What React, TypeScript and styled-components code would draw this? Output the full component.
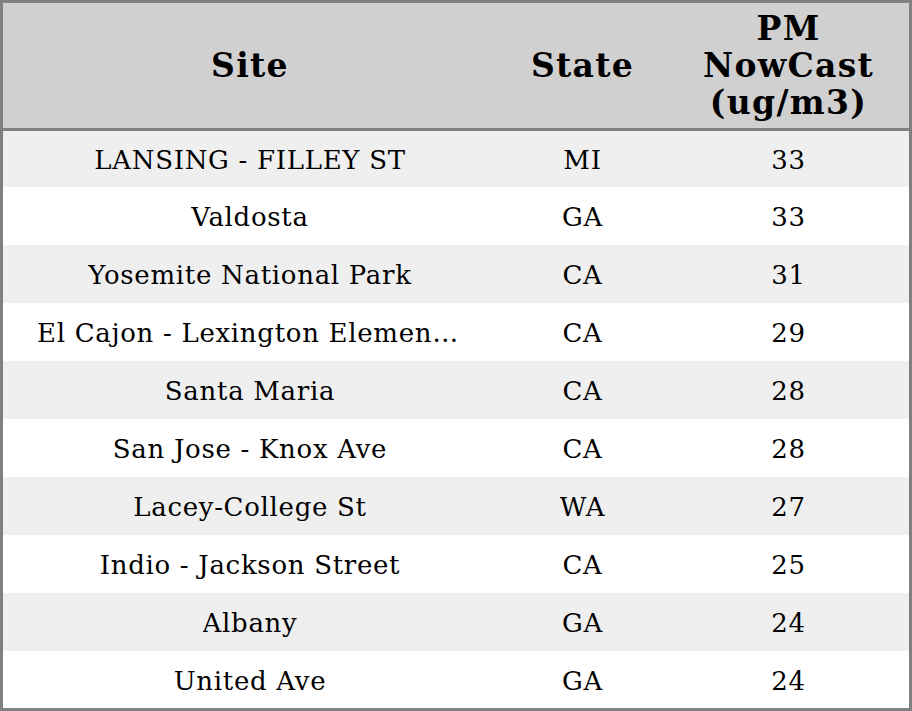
import React from "react";
import styled, { createGlobalStyle } from "styled-components";

const Global = createGlobalStyle`
  html, body { margin: 0; padding: 0; background: #fff; }
  body { font-family: "DejaVu Serif", serif; }
  #root { width: 912px; height: 711px; }
`;

const Table = styled.div`
  box-sizing: border-box;
  width: 912px;
  height: 711px;
  border: 3px solid #808080;
  display: flex;
  flex-direction: column;
  overflow: hidden;
`;

const cols = "494px 171px 1fr";

const HeaderRow = styled.div`
  display: grid;
  grid-template-columns: ${cols};
  flex: 0 0 125px;
  background: #d0d0d0;
  border-bottom: 3px solid #808080;
`;

const HeaderCell = styled.div`
  display: flex;
  align-items: center;
  justify-content: center;
  text-align: center;
  font-weight: bold;
  font-size: 33px;
  line-height: 37px;
  letter-spacing: 1.3px;
  color: #000;
`;

const Body = styled.div`
  display: grid;
  grid-template-rows: 56px repeat(9, 58px);
  flex: 1 1 auto;
  min-height: 0;
  overflow: hidden;
`;

const Row = styled.div<{ $alt: boolean }>`
  display: grid;
  grid-template-columns: ${cols};
  background: ${(p) => (p.$alt ? "#efefef" : "#ffffff")};
`;

const Cell = styled.div`
  display: flex;
  align-items: center;
  justify-content: center;
  padding: 2px 34px 0;
  min-width: 0;
  font-size: 26px;
  letter-spacing: 0.7px;
  color: #000;
`;

const Text = styled.span`
  display: block;
  white-space: nowrap;
  overflow: hidden;
  text-overflow: ellipsis;
  text-align: center;
  max-width: 100%;
`;

const data: [string, string, number][] = [
  ["LANSING - FILLEY ST", "MI", 33],
  ["Valdosta", "GA", 33],
  ["Yosemite National Park", "CA", 31],
  ["El Cajon - Lexington Elementary School", "CA", 29],
  ["Santa Maria", "CA", 28],
  ["San Jose - Knox Ave", "CA", 28],
  ["Lacey-College St", "WA", 27],
  ["Indio - Jackson Street", "CA", 25],
  ["Albany", "GA", 24],
  ["United Ave", "GA", 24],
];

export default function App() {
  return (
    <>
      <Global />
      <Table>
        <HeaderRow>
          <HeaderCell>Site</HeaderCell>
          <HeaderCell>State</HeaderCell>
          <HeaderCell>
            PM
            <br />
            NowCast
            <br />
            (ug/m3)
          </HeaderCell>
        </HeaderRow>
        <Body>
          {data.map(([site, st, v], i) => (
            <Row key={i} $alt={i % 2 === 0}>
              <Cell>
                <Text>{site}</Text>
              </Cell>
              <Cell>
                <Text>{st}</Text>
              </Cell>
              <Cell>
                <Text>{v}</Text>
              </Cell>
            </Row>
          ))}
        </Body>
      </Table>
    </>
  );
}
